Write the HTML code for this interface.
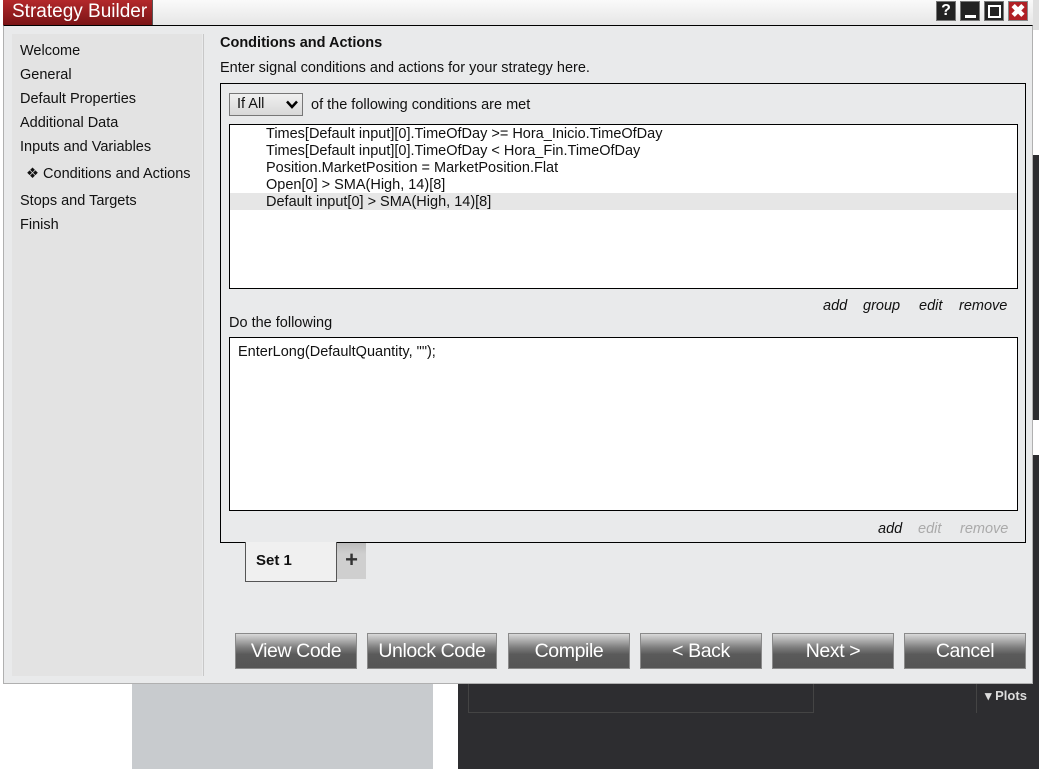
<!DOCTYPE html>
<html><head><style>
*{margin:0;padding:0;box-sizing:border-box}
body{width:1039px;height:769px;position:relative;overflow:hidden;background:#fff;font-family:"Liberation Sans",sans-serif;font-size:14.5px;color:#111}
.a{position:absolute}
.btn{position:absolute;top:633px;height:36px;width:122px;border:1px solid #8a8a8a;background:linear-gradient(#d9d9d9,#7d7d7d 40%,#5a5a5a 60%,#555);color:#fff;font-size:19.5px;text-align:center;line-height:34px;letter-spacing:-0.4px}
.nav div{position:absolute;left:8px;font-size:14.5px}
.lk{position:absolute;font-style:italic;font-size:14.5px}
</style></head><body>
<div class="a" style="left:132px;top:683px;width:301px;height:86px;background:#c8cbce"></div>
<div class="a" style="left:458px;top:683px;width:581px;height:86px;background:#2d2d30"></div>
<div class="a" style="left:468px;top:683px;width:346px;height:30px;border:1px solid #444;border-top:none"></div>
<div class="a" style="left:976px;top:683px;width:1px;height:30px;background:#444"></div>
<div class="a" style="left:985px;top:688px;color:#ddd;font-size:13px;font-weight:bold">▾ Plots</div>
<div class="a" style="left:1033px;top:155px;width:6px;height:265px;background:#2d2d30"></div>
<div class="a" style="left:1033px;top:455px;width:6px;height:230px;background:#2d2d30"></div>
<div class="a" style="left:1033px;top:0;width:6px;height:30px;background:#e0e0e0"></div>
<div class="a" style="left:3px;top:25px;width:1030px;height:659px;background:#e9eaeb;border:1px solid #b0b0b0;border-top:1px solid #000"></div>
<div class="a" style="left:3px;top:0;width:1030px;height:25px;background:linear-gradient(#fafafa,#e6e6e6)"></div>
<div class="a" style="left:3px;top:0;width:150px;height:25px;background:linear-gradient(#b3282b,#7a1416);border-right:1px solid #555;color:#fff;font-size:19px;line-height:24px;padding-left:9px">Strategy Builder</div>
<div class="a" style="left:936px;top:1px;width:20px;height:20px;background:#222;border:1px solid #777;color:#fff;font-weight:bold;text-align:center;line-height:18px;font-size:16px">?</div>
<div class="a" style="left:960px;top:1px;width:20px;height:20px;background:#222;border:1px solid #777"><div class="a" style="left:4px;top:13px;width:11px;height:3px;background:#fff"></div></div>
<div class="a" style="left:984px;top:1px;width:20px;height:20px;background:#222;border:1px solid #777"><div class="a" style="left:3px;top:3px;width:13px;height:13px;border:2px solid #fff"></div></div>
<div class="a" style="left:1008px;top:1px;width:20px;height:20px;background:#b02025;border:1px solid #888;color:#fff;font-weight:bold;text-align:center;line-height:18px;font-size:18px">✖</div>
<div class="a nav" style="left:12px;top:34px;width:190px;height:642px;background:#e3e3e3">
<div style="top:9px">Welcome</div><div style="top:33px">General</div><div style="top:57px">Default Properties</div><div style="top:81px">Additional Data</div><div style="top:105px">Inputs and Variables</div><div style="top:132px;left:14px">❖ Conditions and Actions</div><div style="top:159px">Stops and Targets</div><div style="top:183px">Finish</div>
</div>
<div class="a" style="left:203px;top:34px;width:1px;height:642px;background:#c8c8c8"></div>
<div class="a" style="left:220px;top:35px;font-weight:bold">Conditions and Actions</div>
<div class="a" style="left:220px;top:60px">Enter signal conditions and actions for your strategy here.</div>
<div class="a" style="left:220px;top:83px;width:806px;height:460px;border:1px solid #000"></div>
<div class="a" style="left:229px;top:93px;width:74px;height:23px;border:1px solid #777;background:linear-gradient(#f0f0f0,#d8d8d8);line-height:21px;padding-left:7px">If All
<svg class="a" style="left:56px;top:6px" width="12" height="9" viewBox="0 0 12 9"><path d="M1 1.5L6 7L11 1.5" fill="none" stroke="#000" stroke-width="2.5"/></svg></div>
<div class="a" style="left:311px;top:97px">of the following conditions are met</div>
<div class="a" style="left:229px;top:124px;width:789px;height:165px;border:1px solid #000;background:#fff"></div>
<div class="a" style="left:230px;top:193px;width:787px;height:17px;background:#e6e6e6"></div>
<div class="a" style="left:266px;top:126px;line-height:17px">Times[Default input][0].TimeOfDay &gt;= Hora_Inicio.TimeOfDay<br>Times[Default input][0].TimeOfDay &lt; Hora_Fin.TimeOfDay<br>Position.MarketPosition = MarketPosition.Flat<br>Open[0] &gt; SMA(High, 14)[8]<br>Default input[0] &gt; SMA(High, 14)[8]</div>
<div class="lk" style="left:823px;top:298px">add</div><div class="lk" style="left:863px;top:298px">group</div><div class="lk" style="left:919px;top:298px">edit</div><div class="lk" style="left:959px;top:298px">remove</div>
<div class="a" style="left:229px;top:315px">Do the following</div>
<div class="a" style="left:229px;top:337px;width:789px;height:174px;border:1px solid #000;background:#fff"></div>
<div class="a" style="left:238px;top:344px">EnterLong(DefaultQuantity, "");</div>
<div class="lk" style="left:878px;top:521px">add</div><div class="lk" style="left:918px;top:521px;color:#aaa">edit</div><div class="lk" style="left:960px;top:521px;color:#aaa">remove</div>
<div class="a" style="left:245px;top:542px;width:92px;height:40px;border:1px solid #555;border-top:none;background:#f0f0f0;font-weight:bold;font-size:15px;line-height:38px;padding-left:10px">Set 1</div>
<div class="a" style="left:337px;top:543px;width:29px;height:36px;background:linear-gradient(#bbb,#cfcfcf 30%);font-size:22px;font-weight:bold;text-align:center;line-height:34px;color:#333">+</div>
<div class="btn" style="left:235px">View Code</div>
<div class="btn" style="left:367px;width:130px">Unlock Code</div>
<div class="btn" style="left:508px">Compile</div>
<div class="btn" style="left:640px">&lt; Back</div>
<div class="btn" style="left:772px">Next &gt;</div>
<div class="btn" style="left:904px">Cancel</div>
</body></html>
